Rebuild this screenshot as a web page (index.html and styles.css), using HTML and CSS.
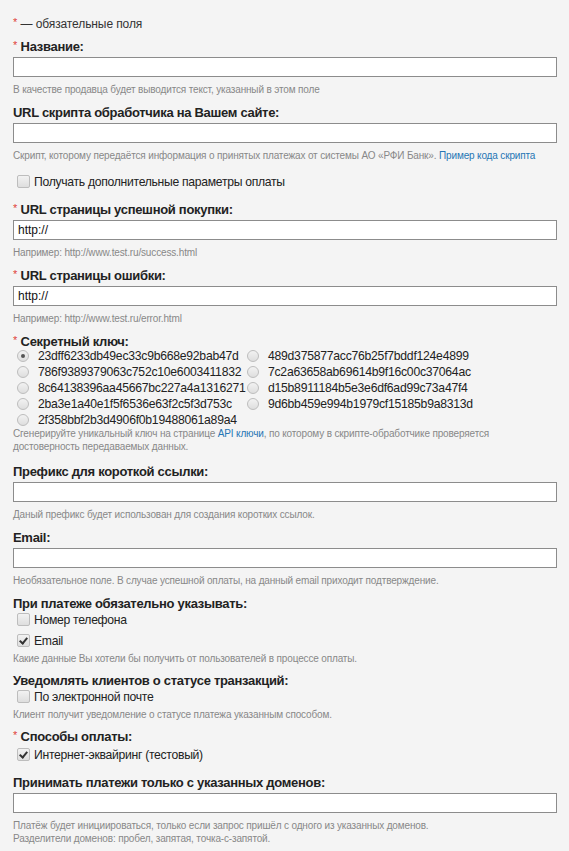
FILE: index.html
```html
<!DOCTYPE html>
<html lang="ru">
<head>
<meta charset="utf-8">
<title>Настройки</title>
<link rel="stylesheet" href="styles.css">
</head>
<body>
<form class="form">
  <p class="legend"><span class="req">*</span> — обязательные поля</p>

  <div class="field">
    <div class="lbl"><span class="req">*</span> Название:</div>
    <input class="txt" type="text">
    <div class="hint">В качестве продавца будет выводится текст, указанный в этом поле</div>
  </div>

  <div class="field">
    <div class="lbl">URL скрипта обработчика на Вашем сайте:</div>
    <input class="txt" type="text">
    <div class="hint">Скрипт, которому передаётся информация о принятых платежах от системы АО «РФИ Банк». <a href="#">Пример кода скрипта</a></div>
    <label class="cb cb-extra"><input type="checkbox"> Получать дополнительные параметры оплаты</label>
  </div>

  <div class="field">
    <div class="lbl"><span class="req">*</span> URL страницы успешной покупки:</div>
    <input class="txt" type="text" value="http://">
    <div class="hint">Например: http://www.test.ru/success.html</div>
  </div>

  <div class="field">
    <div class="lbl"><span class="req">*</span> URL страницы ошибки:</div>
    <input class="txt" type="text" value="http://">
    <div class="hint">Например: http://www.test.ru/error.html</div>
  </div>

  <div class="field field-keys">
    <div class="lbl lbl-keys"><span class="req">*</span> Секретный ключ:</div>
    <div class="keys">
      <label class="rb"><input type="radio" name="key" checked> 23dff6233db49ec33c9b668e92bab47d</label>
      <label class="rb"><input type="radio" name="key"> 489d375877acc76b25f7bddf124e4899</label>
      <label class="rb"><input type="radio" name="key"> 786f9389379063c752c10e6003411832</label>
      <label class="rb"><input type="radio" name="key"> 7c2a63658ab69614b9f16c00c37064ac</label>
      <label class="rb"><input type="radio" name="key"> 8c64138396aa45667bc227a4a1316271</label>
      <label class="rb"><input type="radio" name="key"> d15b8911184b5e3e6df6ad99c73a47f4</label>
      <label class="rb"><input type="radio" name="key"> 2ba3e1a40e1f5f6536e63f2c5f3d753c</label>
      <label class="rb"><input type="radio" name="key"> 9d6bb459e994b1979cf15185b9a8313d</label>
      <label class="rb"><input type="radio" name="key"> 2f358bbf2b3d4906f0b19488061a89a4</label>
    </div>
    <div class="hint hint-tight">Сгенерируйте уникальный ключ на странице <a href="#">API ключи</a>, по которому в скрипте-обработчике проверяется<br>достоверность передаваемых данных.</div>
  </div>

  <div class="field">
    <div class="lbl">Префикс для короткой ссылки:</div>
    <input class="txt" type="text">
    <div class="hint">Даный префикс будет использован для создания коротких ссылок.</div>
  </div>

  <div class="field">
    <div class="lbl">Email:</div>
    <input class="txt" type="text">
    <div class="hint">Необязательное поле. В случае успешной оплаты, на данный email приходит подтверждение.</div>
  </div>

  <div class="field field-cb">
    <div class="lbl lbl-cb">При платеже обязательно указывать:</div>
    <label class="cb"><input type="checkbox"> Номер телефона</label>
    <label class="cb"><input type="checkbox" checked> Email</label>
    <div class="hint hint-cb">Какие данные Вы хотели бы получить от пользователей в процессе оплаты.</div>
  </div>

  <div class="field field-cb">
    <div class="lbl lbl-cb">Уведомлять клиентов о статусе транзакций:</div>
    <label class="cb"><input type="checkbox"> По электронной почте</label>
    <div class="hint hint-cb">Клиент получит уведомление о статусе платежа указанным способом.</div>
  </div>

  <div class="field field-pay">
    <div class="lbl lbl-cb"><span class="req">*</span> Способы оплаты:</div>
    <label class="cb cb-pay"><input type="checkbox" checked> Интернет-эквайринг (тестовый)</label>
  </div>

  <div class="field">
    <div class="lbl">Принимать платежи только с указанных доменов:</div>
    <input class="txt" type="text">
    <div class="hint">Платёж будет инициироваться, только если запрос пришёл с одного из указанных доменов.<br>Разделители доменов: пробел, запятая, точка-с-запятой.</div>
  </div>
</form>
</body>
</html>
```

FILE: styles.css
```css
html, body {
  margin: 0;
  padding: 0;
  background: #f4f4f4;
}
body {
  font-family: "Liberation Sans", Arial, sans-serif;
  color: #222;
}
.form {
  padding: 16px 12px 0 13px;
}
.legend {
  margin: 0 0 7px;
  font-size: 12px;
  line-height: 16px;
  letter-spacing: -0.1px;
  color: #333;
}
.req {
  color: #e0403a;
  font-weight: normal;
  font-size: 11px;
  line-height: 0;
  vertical-align: 2px;
  letter-spacing: 0;
}
.field {
  margin-bottom: 9px;
}
.field-keys {
  margin-bottom: 11px;
}
.field-cb {
  margin-bottom: 8px;
}
.field-pay {
  margin-bottom: 12px;
}
.lbl {
  font-size: 13px;
  font-weight: bold;
  line-height: 16px;
  letter-spacing: -0.3px;
  color: #222;
  margin-bottom: 2px;
}
.lbl-keys {
  margin-bottom: -2px;
}
.lbl-cb {
  margin-bottom: -1px;
}
.txt {
  display: block;
  box-sizing: border-box;
  width: 544px;
  height: 20px;
  margin: 0;
  padding: 0 4px;
  border: 1px solid #8c8c8c;
  background: #fff;
  font-family: inherit;
  font-size: 12px;
  color: #111;
  border-radius: 0;
  outline: none;
}
.hint {
  margin-top: 6px;
  font-size: 10px;
  line-height: 13px;
  letter-spacing: -0.15px;
  color: #888;
}
.hint a {
  color: #2676b5;
  text-decoration: none;
}
.hint-tight {
  margin-top: -1px;
}
.hint-cb {
  margin-top: -1px;
}
.cb, .rb {
  display: flex;
  align-items: center;
  color: #222;
}
.cb {
  height: 17px;
  margin: 0 0 4px 4px;
  font-size: 12.2px;
  letter-spacing: -0.3px;
}
.cb-extra {
  margin-top: 11px;
  margin-bottom: 12px;
}
.cb-pay {
  margin-top: 2px;
}
.keys {
  display: grid;
  grid-template-columns: 230px auto;
  margin-left: 4px;
}
.rb {
  height: 16px;
  font-size: 12.2px;
  letter-spacing: -0.25px;
}
.cb input, .rb input {
  appearance: none;
  -webkit-appearance: none;
  margin: 0 4px 0 0;
  width: 13px;
  height: 13px;
  flex: none;
  border: 1px solid #bdbdbd;
  background: linear-gradient(#f2f2f2, #dedede);
  box-sizing: border-box;
  position: relative;
}
.cb input {
  border-radius: 2px;
}
.rb input {
  border-radius: 50%;
  width: 12px;
  height: 12px;
  margin-right: 9px;
}
.rb input:checked::after {
  content: "";
  position: absolute;
  left: 3px;
  top: 3px;
  width: 4px;
  height: 4px;
  border-radius: 50%;
  background: #555;
}
.cb input:checked::after {
  content: "";
  position: absolute;
  left: 3px;
  top: 1px;
  width: 3px;
  height: 6px;
  border: solid #333;
  border-width: 0 2px 2px 0;
  transform: rotate(40deg);
}
```
